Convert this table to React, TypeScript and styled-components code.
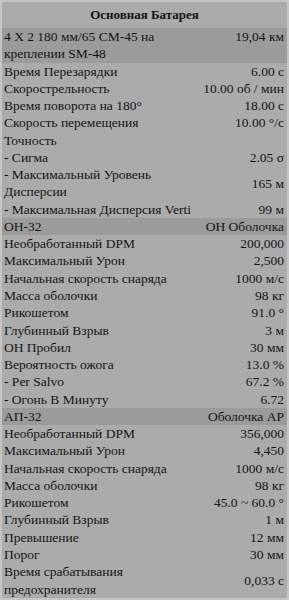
import styled, { createGlobalStyle } from 'styled-components'

type Row = { label: string; value: string }
type Section = { title: string; value: string; rows: Row[] }

const sections: Section[] = [
  {
    title: '4 X 2 180 мм/65 CM-45 на креплении SM-48',
    value: '19,04 км',
    rows: [
      { label: 'Время Перезарядки', value: '6.00 с' },
      { label: 'Скорострельность', value: '10.00 об / мин' },
      { label: 'Время поворота на 180°', value: '18.00 с' },
      { label: 'Скорость перемещения', value: '10.00 °/с' },
      { label: 'Точность', value: '' },
      { label: '- Сигма', value: '2.05 σ' },
      { label: '- Максимальный Уровень Дисперсии', value: '165 м' },
      { label: '- Максимальная Дисперсия Verti', value: '99 м' },
    ],
  },
  {
    title: 'ОН-32',
    value: 'ОН Оболочка',
    rows: [
      { label: 'Необработанный DPM', value: '200,000' },
      { label: 'Максимальный Урон', value: '2,500' },
      { label: 'Начальная скорость снаряда', value: '1000 м/с' },
      { label: 'Масса оболочки', value: '98 кг' },
      { label: 'Рикошетом', value: '91.0 °' },
      { label: 'Глубинный Взрыв', value: '3 м' },
      { label: 'ОН Пробил', value: '30 мм' },
      { label: 'Вероятность ожога', value: '13.0 %' },
      { label: '- Per Salvo', value: '67.2 %' },
      { label: '- Огонь В Минуту', value: '6.72' },
    ],
  },
  {
    title: 'АП-32',
    value: 'Оболочка AP',
    rows: [
      { label: 'Необработанный DPM', value: '356,000' },
      { label: 'Максимальный Урон', value: '4,450' },
      { label: 'Начальная скорость снаряда', value: '1000 м/с' },
      { label: 'Масса оболочки', value: '98 кг' },
      { label: 'Рикошетом', value: '45.0 ~ 60.0 °' },
      { label: 'Глубинный Взрыв', value: '1 м' },
      { label: 'Превышение', value: '12 мм' },
      { label: 'Порог', value: '30 мм' },
      { label: 'Время срабатывания предохранителя', value: '0,033 с' },
    ],
  },
]

export default function App() {
  return (
    <>
      <GlobalStyle />
      <Panel>
        <Title>Основная Батарея</Title>
        {sections.map((s) => (
          <div key={s.title}>
            <HeaderRow>
              <Label>{s.title}</Label>
              <Value>{s.value}</Value>
            </HeaderRow>
            {s.rows.map((r) => (
              <StatRow key={r.label}>
                <Label>{r.label}</Label>
                <Value>{r.value}</Value>
              </StatRow>
            ))}
          </div>
        ))}
      </Panel>
    </>
  )
}

const GlobalStyle = createGlobalStyle`
  body {
    margin: 0;
    background: #c8c8c8;
  }
`

const Panel = styled.div`
  box-sizing: border-box;
  width: 289px;
  height: 600px;
  overflow: hidden;
  border: 2px solid #c4c4c4;
  border-radius: 4px;
  background: #ababab;
  color: #141414;
  font-family: 'Liberation Serif', 'Times New Roman', serif;
  font-size: 13.5px;
  line-height: 17.27px;
`

const Title = styled.div`
  height: 26px;
  line-height: 25px;
  text-align: center;
  font-weight: bold;
  font-size: 13px;
`

const StatRow = styled.div`
  display: flex;
  align-items: center;
  justify-content: space-between;
  padding: 0 3px 0 2px;
`

const HeaderRow = styled(StatRow)`
  align-items: flex-start;
  background: #9b9b9b;
`

const Label = styled.span`
  max-width: 190px;
`

const Value = styled.span`
  margin-left: auto;
  text-align: right;
  white-space: nowrap;
`
